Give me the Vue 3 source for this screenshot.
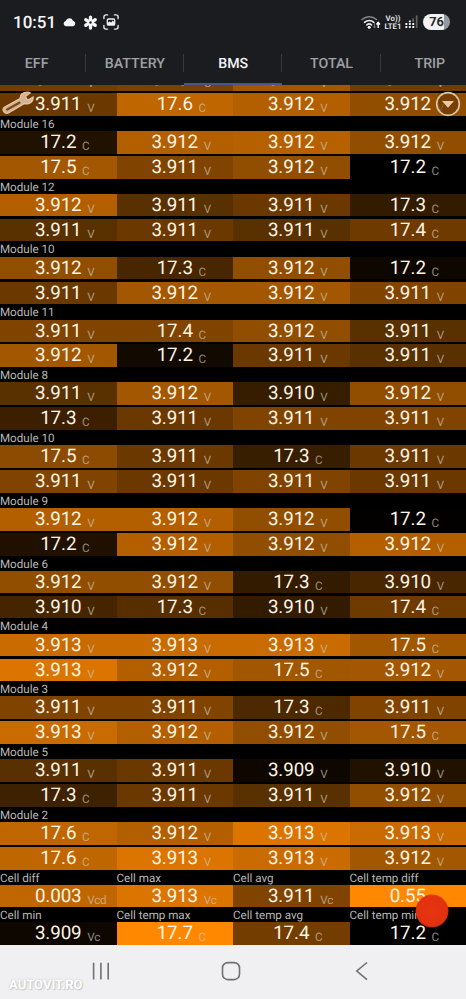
<script setup>
import { computed } from 'vue';

const tabs = ['EFF', 'BATTERY', 'BMS', 'TOTAL', 'TRIP'];
const activeTab = 'BMS';

// each cell is [value, unit, heat level 0..1]
const clippedRow = [
  ['3.911', 'V', 0.45],
  ['3.909', 'C', 0.48],
  ['3.912', 'V', 0.64],
  ['3.912', 'V', 0.45]
];

const modules = [
  {
    name: 'Module 16',
    cells: [
      ['17.2', 'C', 0.13], ['3.912', 'V', 0.7], ['3.912', 'V', 0.71], ['3.912', 'V', 0.57],
      ['17.5', 'C', 0.64], ['3.911', 'V', 0.5], ['3.912', 'V', 0.57], ['17.2', 'C', 0]
    ]
  },
  {
    name: 'Module 12',
    cells: [
      ['3.912', 'V', 0.7], ['3.911', 'V', 0.35], ['3.911', 'V', 0.42], ['17.3', 'C', 0.2],
      ['3.911', 'V', 0.35], ['3.911', 'V', 0.42], ['3.911', 'V', 0.35], ['17.4', 'C', 0.43]
    ]
  },
  {
    name: 'Module 10',
    cells: [
      ['3.912', 'V', 0.57], ['17.3', 'C', 0.28], ['3.912', 'V', 0.57], ['17.2', 'C', 0.05],
      ['3.911', 'V', 0.42], ['3.912', 'V', 0.64], ['3.912', 'V', 0.64], ['3.911', 'V', 0.5]
    ]
  },
  {
    name: 'Module 11',
    cells: [
      ['3.911', 'V', 0.5], ['17.4', 'C', 0.5], ['3.912', 'V', 0.57], ['3.911', 'V', 0.35],
      ['3.912', 'V', 0.64], ['17.2', 'C', 0.07], ['3.911', 'V', 0.42], ['3.911', 'V', 0.35]
    ]
  },
  {
    name: 'Module 8',
    cells: [
      ['3.911', 'V', 0.35], ['3.912', 'V', 0.64], ['3.910', 'V', 0.21], ['3.912', 'V', 0.57],
      ['17.3', 'C', 0.23], ['3.911', 'V', 0.42], ['3.911', 'V', 0.5], ['3.911', 'V', 0.5]
    ]
  },
  {
    name: 'Module 10',
    cells: [
      ['17.5', 'C', 0.55], ['3.911', 'V', 0.42], ['17.3', 'C', 0.22], ['3.911', 'V', 0.42],
      ['3.911', 'V', 0.5], ['3.911', 'V', 0.42], ['3.911', 'V', 0.5], ['3.911', 'V', 0.42]
    ]
  },
  {
    name: 'Module 9',
    cells: [
      ['3.912', 'V', 0.7], ['3.912', 'V', 0.7], ['3.912', 'V', 0.57], ['17.2', 'C', 0.01],
      ['17.2', 'C', 0.12], ['3.912', 'V', 0.7], ['3.912', 'V', 0.57], ['3.912', 'V', 0.7]
    ]
  },
  {
    name: 'Module 6',
    cells: [
      ['3.912', 'V', 0.57], ['3.912', 'V', 0.57], ['17.3', 'C', 0.2], ['3.910', 'V', 0.28],
      ['3.910', 'V', 0.27], ['17.3', 'C', 0.34], ['3.910', 'V', 0.2], ['17.4', 'C', 0.43]
    ]
  },
  {
    name: 'Module 4',
    cells: [
      ['3.913', 'V', 0.79], ['3.913', 'V', 0.79], ['3.913', 'V', 0.79], ['17.5', 'C', 0.63],
      ['3.913', 'V', 0.86], ['3.912', 'V', 0.7], ['17.5', 'C', 0.63], ['3.912', 'V', 0.64]
    ]
  },
  {
    name: 'Module 3',
    cells: [
      ['3.911', 'V', 0.5], ['3.911', 'V', 0.5], ['17.3', 'C', 0.3], ['3.911', 'V', 0.5],
      ['3.913', 'V', 0.79], ['3.912', 'V', 0.7], ['3.912', 'V', 0.57], ['17.5', 'C', 0.64]
    ]
  },
  {
    name: 'Module 5',
    cells: [
      ['3.911', 'V', 0.35], ['3.911', 'V', 0.42], ['3.909', 'V', 0.05], ['3.910', 'V', 0.13],
      ['17.3', 'C', 0.24], ['3.911', 'V', 0.42], ['3.911', 'V', 0.35], ['3.912', 'V', 0.57]
    ]
  },
  {
    name: 'Module 2',
    cells: [
      ['17.6', 'C', 0.75], ['3.912', 'V', 0.7], ['3.913', 'V', 0.86], ['3.913', 'V', 0.79],
      ['17.6', 'C', 0.75], ['3.913', 'V', 0.86], ['3.913', 'V', 0.79], ['3.912', 'V', 0.64]
    ]
  }
];

const firstRow = [
  ['3.911', 'V', 0.42],
  ['17.6', 'C', 0.75],
  ['3.912', 'V', 0.7],
  ['3.912', 'V', 0.57]
];

const summary = [
  { label: 'Cell diff', cell: ['0.003', 'Vcd', 0.75] },
  { label: 'Cell max', cell: ['3.913', 'Vc', 0.86] },
  { label: 'Cell avg', cell: ['3.911', 'Vc', 0.5] },
  { label: 'Cell temp diff', cell: ['0.55', 'C', 1] },
  { label: 'Cell min', cell: ['3.909', 'Vc', 0.05] },
  { label: 'Cell temp max', cell: ['17.7', 'C', 1] },
  { label: 'Cell temp avg', cell: ['17.4', 'C', 0.45] },
  { label: 'Cell temp min', cell: ['17.2', 'C', 0] }
];

const heat = level => ({
  backgroundColor: `rgb(${Math.round(255 * level)}, ${Math.round(136 * level)}, 0)`
});

const groups = computed(() => [
  { name: '', cells: firstRow },
  ...modules
]);
</script>

<template>
  <div class="screen">
    <header class="top">
      <div class="status">
        <div class="status-left">
          <span class="clock">10:51</span>
          <svg class="cloud" viewBox="0 0 13 10">
            <path d="M3 9.3a2.7 2.7 0 0 1-.3-5.3A3.9 3.9 0 0 1 10 3.7a2.9 2.9 0 0 1 .2 5.6z" fill="#f2f3f5" />
          </svg>
          <svg class="flower" viewBox="0 0 14 14">
            <g stroke="#f4f5f7" stroke-width="3.1" stroke-linecap="round">
              <path d="M7 1.9v2.5M7 9.6v2.5M2.6 4.4l2.1 1.3M9.3 8.3l2.1 1.3M2.6 9.6l2.1-1.3M9.3 5.7l2.1-1.3" />
            </g>
            <circle cx="7" cy="7" r="2.8" fill="#f4f5f7" />
            <circle cx="7" cy="7" r="1.1" fill="#1b1c20" />
          </svg>
          <svg class="capture" viewBox="0 0 16 16">
            <path
              d="M.9 4.6V3A2.1 2.1 0 0 1 3 .9h1.6M11.4.9H13A2.1 2.1 0 0 1 15.1 3v1.6M15.1 11.4V13a2.1 2.1 0 0 1-2.1 2.1h-1.6M4.6 15.1H3A2.1 2.1 0 0 1 .9 13v-1.6"
              fill="none" stroke="#e6e7e9" stroke-width="1.4" stroke-linecap="round"
            />
            <rect x="4.3" y="5" width="7.4" height="6.2" rx="1.2" fill="none" stroke="#f0f0f2" stroke-width="1.3" />
            <path d="M4.5 11V9l2-1.6 1.6 1.2 1.7-2L11.8 9v2z" fill="#f0f0f2" />
          </svg>
        </div>
        <div class="status-right">
          <svg class="wifi" viewBox="0 0 20 15">
            <g fill="none" stroke="#e9eaec" stroke-width="1.6" stroke-linecap="round">
              <path d="M1 4.5a10.6 10.6 0 0 1 14.4 0" stroke="#85868a" />
              <path d="M3.5 7.3a7 7 0 0 1 9.4 0" />
              <path d="M5.9 9.9a3.6 3.6 0 0 1 4.6 0" />
            </g>
            <circle cx="8.2" cy="12.2" r="1.5" fill="#fff" />
            <path d="M13.5 8.2v4.6M12.2 11.4l1.3 1.5 1.3-1.5" fill="none" stroke="#77787c" stroke-width="1" />
            <path d="M17.2 13V8M15.4 9.5L17.2 7.3 19 9.5" fill="none" stroke="#fff" stroke-width="1.4" />
          </svg>
          <div class="lte">
            <span>Vo))</span>
            <span>LTE1</span>
          </div>
          <svg class="signal" viewBox="0 0 13 14">
            <g fill="#f4f4f6">
              <path d="M.4 11h1.9v2H.4zM.4 8h1.9v2H.4zM3.9 11h1.9v2H3.9zM3.9 8h1.9v2H3.9zM3.9 5.4h1.9v1.8H3.9zM7.3 11h1.9v2H7.3zM7.3 8h1.9v2H7.3z" />
            </g>
            <path d="M7.3 3.2h1.7V7H7.3zM10.8.6h1.7V13h-1.7z" fill="#606165" />
          </svg>
          <div class="battery">76</div>
        </div>
      </div>
      <nav class="tabs">
        <div v-for="tab in tabs" :key="tab" class="tab" :class="{ active: tab === activeTab }">
          <span>{{ tab }}</span>
        </div>
      </nav>
    </header>

    <main class="board">
      <div class="row clipped">
        <div v-for="(cell, i) in clippedRow" :key="i" class="cell" :style="heat(cell[2])">
          <span class="value">{{ cell[0] }}</span>
          <span class="unit">{{ cell[1] }}</span>
        </div>
      </div>

      <section v-for="(group, g) in groups" :key="g">
        <div v-if="group.name" class="label">{{ group.name }}</div>
        <div class="row">
          <div v-for="(cell, i) in group.cells" :key="i" class="cell" :style="heat(cell[2])">
            <span class="value">{{ cell[0] }}</span>
            <span class="unit">{{ cell[1] }}</span>
          </div>
        </div>
      </section>

      <div class="summary">
        <div v-for="item in summary" :key="item.label">
          <div class="label">{{ item.label }}</div>
          <div class="cell" :style="heat(item.cell[2])">
            <span class="value">{{ item.cell[0] }}</span>
            <span class="unit">{{ item.cell[1] }}</span>
          </div>
        </div>
      </div>

      <svg class="wrench" viewBox="0 0 32 24">
        <path
          d="M1.8 16.6 18 7.6c-.2-3.8 3-6.8 8.2-6.4l2 .8-4.5 3.2.8 2.8 2.6.5 4-2.6c.6 4.6-3.6 8-9 6.8L6.5 22c-4 1.6-6.8-3-4.7-5.4z"
          fill="#d6b391" stroke="#e3c5a6" stroke-width="1.2"
        />
        <path d="M5.2 18.5 17.4 11.7" stroke="#7a4c20" stroke-width="2.4" stroke-linecap="round" />
      </svg>
      <svg class="dropdown" viewBox="0 0 26 26">
        <circle cx="13" cy="13" r="11.3" fill="#643600" fill-opacity=".6" stroke="#dbc3aa" stroke-width="1.7" />
        <path d="M7 10h12l-6 6.8z" fill="#ecc9a6" />
      </svg>
      <div class="touch"></div>
    </main>

    <footer class="navbar">
      <svg class="nav-icon" viewBox="0 0 20 20">
        <path d="M2.6 1.8v16.6M9.9 1.8v16.6M17.2 1.8v16.6" stroke="#707073" stroke-width="1.6" />
      </svg>
      <svg class="nav-icon" viewBox="0 0 20 20">
        <rect x="1.5" y="1.6" width="17" height="17" rx="5.4" fill="none" stroke="#707073" stroke-width="1.6" />
      </svg>
      <svg class="nav-icon" viewBox="0 0 20 20">
        <path d="M15 1.5 4.8 10 15 18.6" fill="none" stroke="#707073" stroke-width="1.6" />
      </svg>
      <span class="watermark">AUTOVIT.RO</span>
    </footer>
  </div>
</template>

<style>
body {
  margin: 0;
  background: #000;
}
</style>

<style scoped>
.screen {
  display: flex;
  flex-direction: column;
  width: 466px;
  height: 999px;
  overflow: hidden;
  background: #000;
  font-family: Roboto, "Liberation Sans", sans-serif;
  text-rendering: geometricPrecision;
}

.top {
  flex: none;
  height: 85.4px;
  background: #1b1c20;
}

.status {
  display: flex;
  justify-content: space-between;
  align-items: center;
  box-sizing: border-box;
  height: 44px;
  padding: 0 16px 0 13px;
}

.status-left,
.status-right {
  display: flex;
  align-items: center;
}

.clock {
  width: 50px;
  padding-top: 1px;
  color: #f5f6f8;
  font-size: 17px;
  font-weight: 500;
}

.cloud {
  width: 13px;
  height: 10px;
}

.flower {
  width: 15px;
  height: 15px;
  margin-left: 6.5px;
}

.capture {
  width: 16px;
  height: 16px;
  margin-left: 5px;
}

.wifi {
  width: 20px;
  height: 15px;
}

.lte {
  display: flex;
  flex-direction: column;
  align-items: center;
  width: 18px;
  margin-left: 3px;
  padding-top: 1px;
  color: #ececee;
  font-size: 7.8px;
  font-weight: 600;
  line-height: 7.6px;
  white-space: nowrap;
}

.signal {
  width: 13px;
  height: 14px;
  margin-left: 3px;
}

.battery {
  width: 27px;
  height: 16px;
  margin-left: 5px;
  border-radius: 8px;
  background: linear-gradient(90deg, #f2f2f4 76%, #97989b 76%);
  color: #28292c;
  font-size: 12.8px;
  font-weight: 700;
  line-height: 17.4px;
  text-align: center;
}

.tabs {
  display: grid;
  grid-template-columns: repeat(5, 98.3px);
  height: 41.4px;
  margin-left: -12.5px;
}

.tab {
  display: flex;
  align-items: center;
  justify-content: center;
  box-sizing: border-box;
  padding-top: 1px;
  border-bottom: 2.4px solid transparent;
  color: #a0a1a4;
  font-size: 14.2px;
  font-weight: 500;
  background: linear-gradient(#38393d, #38393d) right 10px / 1px 18px no-repeat;
}

.tab:last-child {
  background: none;
}

.tab.active {
  border-bottom-color: #48558c;
  color: #f3f3f5;
}

.board {
  position: relative;
  flex: none;
  height: 859.4px;
  overflow: hidden;
}

.row {
  display: grid;
  grid-template-columns: repeat(4, 1fr);
  row-gap: 2.4px;
}

.row.clipped {
  height: 5.6px;
  margin-bottom: 2.2px;
  overflow: hidden;
  align-content: end;
}

.cell {
  display: grid;
  grid-template-columns: 1fr auto 1fr;
  align-items: baseline;
  height: 22.6px;
  line-height: 23px;
}

.value {
  grid-column: 2;
  color: #fff5e6;
  font-size: 18.8px;
  letter-spacing: -0.1px;
}

.unit {
  position: relative;
  top: 2px;
  height: 18px;
  padding-left: 5.6px;
  color: rgba(205, 196, 184, 0.7);
  font-size: 11.7px;
  letter-spacing: -0.2px;
}

.label {
  height: 15.25px;
  color: #b9b9b9;
  font-size: 11.6px;
  line-height: 16.6px;
  white-space: nowrap;
}

.summary {
  display: grid;
  grid-template-columns: repeat(4, 1fr);
}

.summary .label {
  height: 15px;
}

.wrench {
  position: absolute;
  left: 2px;
  top: 6px;
  width: 32px;
  height: 24px;
}

.dropdown {
  position: absolute;
  left: 435px;
  top: 6px;
  width: 26px;
  height: 26px;
}

.touch {
  position: absolute;
  left: 415px;
  top: 809px;
  width: 34px;
  height: 34px;
  border-radius: 50%;
  background: radial-gradient(circle, #e63511 0, #e3310f 62%, rgba(222, 48, 16, 0.9) 66%, rgba(222, 48, 16, 0) 71%);
}

.navbar {
  position: relative;
  display: flex;
  justify-content: center;
  gap: 110.5px;
  flex: 1;
  padding: 16.5px 4px 0 0;
  background: #f0f0f3;
}

.nav-icon {
  width: 20px;
  height: 20px;
}

.watermark {
  position: absolute;
  left: 9px;
  bottom: 6px;
  color: #fff;
  font-size: 13px;
  font-weight: 700;
  line-height: 15px;
  text-shadow: 0 0 2px #bbb, 1px 1px 1px #ccc;
}
</style>
